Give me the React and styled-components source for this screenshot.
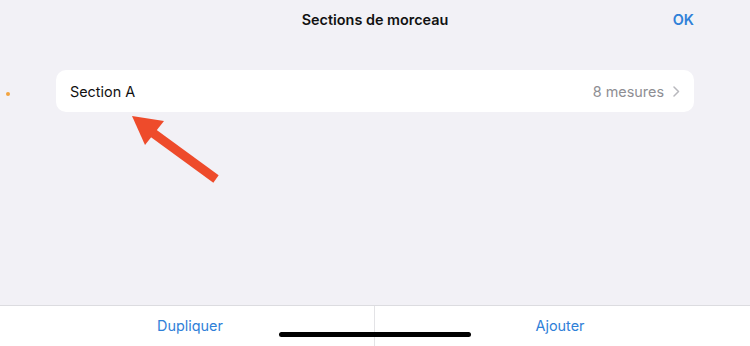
import React from "react";
import styled, { createGlobalStyle } from "styled-components";

const GlobalStyle = createGlobalStyle`
  html, body {
    margin: 0;
    padding: 0;
    background: #f2f1f6;
    font-family: Inter, "Noto Sans", "Liberation Sans", sans-serif;
  }
`;

const Screen = styled.div`
  position: relative;
  width: 750px;
  height: 346px;
  display: flex;
  flex-direction: column;
  background: #f2f1f6;
  overflow: hidden;
`;

const Header = styled.div`
  height: 38px;
  display: grid;
  grid-template-columns: 1fr auto 1fr;
  align-items: center;
  padding: 0 56px 0 56px;
`;

const Title = styled.div`
  grid-column: 2;
  font-size: 14.4px;
  font-weight: 600;
  color: #111;
`;

const HeaderAction = styled.div`
  justify-self: end;
  font-size: 14.4px;
  font-weight: 600;
  color: #2f80d8;
`;

const Content = styled.div`
  position: relative;
  flex: 1;
  padding: 32px 56px 0 56px;
`;

const Row = styled.div`
  height: 42px;
  display: flex;
  align-items: center;
  background: #fff;
  border-radius: 10px;
  padding: 0 14px;
`;

const RowLabel = styled.div`
  flex: 1;
  font-size: 14.4px;
  color: #111;
`;

const RowValue = styled.div`
  font-size: 14.4px;
  color: #8e8e93;
  margin-right: 9px;
`;

const Dot = styled.span`
  position: absolute;
  left: 6px;
  top: 54px;
  width: 4px;
  height: 4px;
  border-radius: 50%;
  background: #f3a33f;
`;

const Arrow = styled.svg`
  position: absolute;
  left: 126px;
  top: 70px;
`;

const Toolbar = styled.div`
  height: 40px;
  display: grid;
  grid-template-columns: 374px 1fr;
  background: #fff;
  border-top: 1px solid #dcdce0;
`;

const ToolButton = styled.div`
  display: flex;
  align-items: center;
  justify-content: center;
  font-size: 14.4px;
  color: #2f80d8;
  border-left: ${p => (p.divided ? "1px solid #e3e3e6" : "none")};
  padding: ${p => (p.divided ? "0 5px 2px 0" : "0 0 2px 6px")};
`;

const HomeIndicator = styled.div`
  position: absolute;
  left: 279px;
  bottom: 9px;
  width: 192px;
  height: 5px;
  border-radius: 3px;
  background: #000;
`;

const Chevron = () => (
  <svg width="7" height="11" viewBox="0 0 7 11">
    <path d="M1 1 L5.5 5.5 L1 10" fill="none" stroke="#b8b8bd" strokeWidth="1.5" strokeLinecap="round" strokeLinejoin="round" />
  </svg>
);

export default function App() {
  return (
    <>
      <GlobalStyle />
      <Screen>
        <Header>
          <Title>Sections de morceau</Title>
          <HeaderAction>OK</HeaderAction>
        </Header>
        <Content>
          <Dot />
          <Row>
            <RowLabel>Section A</RowLabel>
            <RowValue>8 mesures</RowValue>
            <Chevron />
          </Row>
          <Arrow width="100" height="80" viewBox="0 0 100 80">
            <path d="M90 71 L27 25" stroke="#ee4b2b" strokeWidth="9" strokeLinecap="butt" />
            <polygon points="6,8 38,13 19,37" fill="#ee4b2b" />
          </Arrow>
        </Content>
        <Toolbar>
          <ToolButton>Dupliquer</ToolButton>
          <ToolButton divided>Ajouter</ToolButton>
        </Toolbar>
        <HomeIndicator />
      </Screen>
    </>
  );
}
